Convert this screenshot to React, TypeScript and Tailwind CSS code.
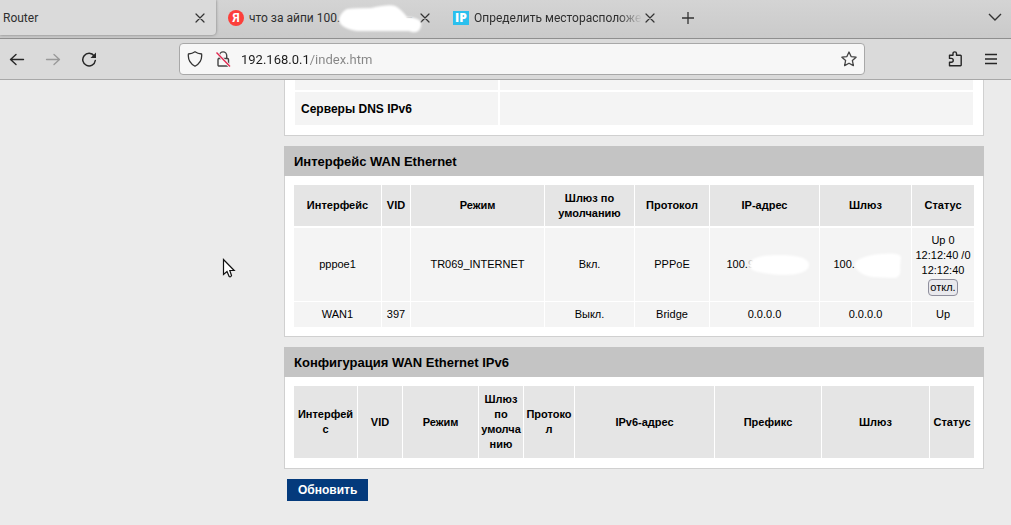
import { type ReactNode } from 'react';

interface TabProps {
    title: string;
    icon?: ReactNode;
    active?: boolean;
    fade?: boolean;
    cover?: ReactNode;
}

interface Column {
    label: string;
    width: string;
}

const wanColumns: Column[] = [
    { label: 'Интерфейс', width: 'w-[88px]' },
    { label: 'VID', width: 'w-[29px]' },
    { label: 'Режим', width: 'w-[134px]' },
    { label: 'Шлюз по умолчанию', width: 'w-[90px]' },
    { label: 'Протокол', width: 'w-[75px]' },
    { label: 'IP-адрес', width: 'w-[110px]' },
    { label: 'Шлюз', width: 'w-[92px]' },
    { label: 'Статус', width: 'w-[62px]' },
];

const ipv6Columns: Column[] = [
    { label: 'Интерфейс', width: 'w-[64px]' },
    { label: 'VID', width: 'w-[45px]' },
    { label: 'Режим', width: 'w-[76px]' },
    { label: 'Шлюз по умолчанию', width: 'w-[45px]' },
    { label: 'Протокол', width: 'w-[51px]' },
    { label: 'IPv6-адрес', width: 'w-[140px]' },
    { label: 'Префикс', width: 'w-[107px]' },
    { label: 'Шлюз', width: 'w-[108px]' },
    { label: 'Статус', width: 'w-[44px]' },
];

function CloseIcon() {
    return (
        <svg className="size-4" viewBox="0 0 16 16" fill="none" stroke="#333" strokeWidth="1.2">
            <path d="M4 4l8 8M12 4l-8 8" strokeLinecap="round" />
        </svg>
    );
}

function YandexIcon() {
    return (
        <span className="mr-[5px] flex size-4 shrink-0 items-center justify-center rounded-full bg-[#fc3f3a] text-xs font-bold leading-4 text-white">
            Я
        </span>
    );
}

function IpIcon() {
    return (
        <span className="mr-[5px] flex h-[14px] w-4 shrink-0 items-center justify-center bg-[#2bc0ee] font-['Open_Sans',sans-serif] text-xs font-extrabold leading-[14px] text-white">
            IP
        </span>
    );
}

function BrowserTab({ title, icon, active, fade, cover }: TabProps) {
    return (
        <div
            className={
                active
                    ? 'flex h-[35px] w-[216px] items-center rounded-br bg-[#dadada] pl-[3px] pr-2 shadow-[0_0_3px_#777]'
                    : 'relative flex h-[35px] w-[225px] items-center pl-3 pr-2'
            }
        >
            {icon}
            <span
                className={
                    fade
                        ? 'min-w-0 flex-1 whitespace-nowrap mask-[linear-gradient(to_left,transparent,black_24px)]'
                        : 'min-w-0 flex-1 whitespace-nowrap'
                }
            >
                {title}
            </span>
            {cover}
            <button type="button" aria-label="Закрыть вкладку">
                <CloseIcon />
            </button>
        </div>
    );
}

function TabStrip() {
    return (
        <div className="flex h-[39px] border-b border-[#8f8f8f] bg-linear-to-b from-[#d4d4d4] to-[#cacaca] text-xs text-[#2e2e2e]">
            <BrowserTab title="Router" active />
            <BrowserTab
                title="что за айпи 100."
                icon={<YandexIcon />}
                cover={
                    <>
                        <span className="mr-1 text-[#999]">–</span>
                        <svg className="absolute left-[121px] top-1 h-[30px] w-[88px] blur-[1px]" viewBox="0 0 88 30" fill="#fff">
                            <path d="M10 5Q20 4 34 4Q52 0 58 2Q64 5 70 13Q86 14 84 22Q82 31 72 27H20Q2 24 2 15Q4 8 10 5Z" />
                        </svg>
                    </>
                }
            />
            <BrowserTab title="Определить месторасположе" icon={<IpIcon />} fade />
            <button type="button" aria-label="Новая вкладка" className="ml-3 h-[35px]">
                <svg className="size-5" viewBox="0 0 20 20" stroke="#333" strokeWidth="1.3">
                    <path d="M10 4v12M4 10h12" />
                </svg>
            </button>
            <button type="button" aria-label="Список вкладок" className="ml-auto mr-2 h-[33px]">
                <svg className="size-4" viewBox="0 0 16 16" fill="none" stroke="#333" strokeWidth="1.4">
                    <path d="M2 5l6 6 6-6" />
                </svg>
            </button>
        </div>
    );
}

function Toolbar() {
    return (
        <div className="flex h-[41px] items-center border-b border-[#a8a8a8] bg-[#dadada]">
            <div className="flex w-[179px] shrink-0 items-center gap-5 pl-[9px]">
                <button type="button" aria-label="Назад">
                    <svg className="size-4" viewBox="0 0 16 16" fill="none" stroke="#262626" strokeWidth="1.4">
                        <path d="M14.500 8.500H1.500M7 3.500L1.500 8.500l5.500 5" strokeLinecap="round" strokeLinejoin="round" />
                    </svg>
                </button>
                <button type="button" aria-label="Вперёд" disabled>
                    <svg className="size-4" viewBox="0 0 16 16" fill="none" stroke="#999" strokeWidth="1.3">
                        <path d="M1.500 8.500h13M9 3.500l5.500 5-5.500 5" strokeLinecap="round" strokeLinejoin="round" />
                    </svg>
                </button>
                <button type="button" aria-label="Обновить страницу">
                    <svg className="size-4" viewBox="0 0 16 16" fill="none" stroke="#262626" strokeWidth="1.5">
                        <path d="M13.200 5A6.300 6.300 0 1 0 14.300 9.500" strokeLinecap="round" />
                        <path d="M15 1.500v5.500H9.500z" fill="#262626" stroke="none" />
                    </svg>
                </button>
            </div>
            <div className="flex h-8 w-[686px] min-w-0 items-center rounded-[4px] border border-[#a8a8a8] bg-[#f7f7f7] px-[7px]">
                <svg className="size-4 shrink-0" viewBox="0 0 16 16" fill="none" stroke="#333" strokeWidth="1.300">
                    <path d="M8 .8Q10.500 2.700 14.600 3Q15.500 11 8 15.200Q.5 11 1.400 3Q5.500 2.700 8 .8Z" strokeLinejoin="round" />
                </svg>
                <svg className="ml-3 size-4 shrink-0" viewBox="0 0 16 16" fill="none" strokeWidth="1.400">
                    <rect x="3" y="7.500" width="10.500" height="7.500" rx="1" stroke="#444" />
                    <path d="M4.500 7.500V4.500a3.600 3.600 0 0 1 7.200 0v3" stroke="#444" />
                    <path d="M1.500 1.500l13.500 14" stroke="#f7f7f7" strokeWidth="3" />
                    <path d="M1.500 1.500l13.500 14" stroke="#e22850" />
                </svg>
                <input
                    type="text"
                    aria-label="Адрес"
                    defaultValue="192.168.0.1/index.htm"
                    className="ml-[10px] min-w-0 flex-1 bg-[linear-gradient(90deg,#1c1c1c_67px,#858585_67px)] bg-clip-text pt-px text-[13px] text-transparent outline-none"
                />
                <button type="button" aria-label="Добавить в закладки">
                    <svg className="size-4" viewBox="0 0 16 16" fill="none" stroke="#444" strokeWidth="1.300">
                        <path
                            d="M8 1l2.100 4.600 5 .6-3.700 3.400 1 5L8 12.200l-4.400 2.400 1-5L.9 6.200l5-.6z"
                            strokeLinejoin="round"
                        />
                    </svg>
                </button>
            </div>
            <button type="button" aria-label="Расширения" className="ml-auto">
                <svg className="size-4" viewBox="0 0 16 16" fill="none" stroke="#262626" strokeWidth="1.400">
                    <path
                        d="M2.500 14.700V11.300H4.300a1.900 1.900 0 0 0 0-3.900H2.500V4.300H6V2.600a1.700 1.700 0 0 1 3.500 0V4.300H13.500a.7.700 0 0 1 .7.700V14a.7.700 0 0 1-.7.700Z"
                        strokeLinejoin="round"
                    />
                </svg>
            </button>
            <button type="button" aria-label="Меню" className="ml-5 mr-3">
                <svg className="size-4" viewBox="0 0 16 16" stroke="#262626" strokeWidth="1.300">
                    <path d="M2 3.500h12M2 8h12M2 12.500h12" />
                </svg>
            </button>
        </div>
    );
}

function Panel({ title, children }: { title: string; children: ReactNode }) {
    return (
        <section className="mt-[10px]">
            <h2 className="h-[30px] bg-[#c4c4c4] px-[10px] text-[13px] font-bold leading-8">{title}</h2>
            <div className="border border-t-0 border-[#d0d0d0] bg-white p-[9px]">{children}</div>
        </section>
    );
}

function HeadRow({ columns, className }: { columns: Column[]; className: string }) {
    return (
        <thead>
            <tr className={className}>
                {columns.map((column) => (
                    <th
                        key={column.label}
                        scope="col"
                        className={`${column.width} border-r border-white bg-[#e5e5e5] bg-clip-padding px-[2px] font-bold wrap-break-word last:border-r-0`}
                    >
                        {column.label}
                    </th>
                ))}
            </tr>
        </thead>
    );
}

function Cell({ children }: { children?: ReactNode }) {
    return <td className="border-r border-white bg-[#f4f4f4] px-[2px] last:border-r-0">{children}</td>;
}

const tableClass = 'w-full table-fixed border-separate border-spacing-0 text-center text-[11px] leading-[15px]';

export default function App() {
    return (
        <div className="relative min-h-screen bg-[#ebebeb] font-['Roboto',sans-serif]">
            <TabStrip />
            <Toolbar />

            <main className="ml-[284px] mr-[27px] pb-6 font-['Liberation_Sans',Arial,sans-serif] text-black">
                <div className="border border-t-0 border-[#d0d0d0] bg-white px-[10px] pb-[10px]">
                    <table className="w-full table-fixed border-separate border-spacing-0 text-left text-xs">
                        <tbody>
                            <tr className="h-3">
                                <td className="w-[205px] border-b-2 border-r-2 border-white bg-[#f4f4f4]" />
                                <td className="border-b-2 border-white bg-[#f4f4f4]" />
                            </tr>
                            <tr className="h-[33px]">
                                <th scope="row" className="border-r-2 border-white bg-[#f4f4f4] px-[6px] font-bold">
                                    Серверы DNS IPv6
                                </th>
                                <td className="bg-[#f4f4f4]" />
                            </tr>
                        </tbody>
                    </table>
                </div>

                <Panel title="Интерфейс WAN Ethernet">
                    <table className={tableClass}>
                        <HeadRow columns={wanColumns} className="h-[43px] *:border-b-2" />
                        <tbody>
                            <tr className="h-[74px] *:border-b">
                                <Cell>pppoe1</Cell>
                                <Cell />
                                <Cell>TR069_INTERNET</Cell>
                                <Cell>Вкл.</Cell>
                                <Cell>PPPoE</Cell>
                                <Cell>
                                    <span className="relative inline-block w-[76px] text-left">
                                        100.<span className="text-[#bbb]">9</span>
                                        <svg className="absolute -top-[4px] left-[20px] h-6 w-[64px] blur-[1px]" viewBox="0 0 64 24" fill="#fff">
                                            <path d="M5 7Q12 2 32 2Q62 2 62 12Q62 22 34 22Q8 20 4 16Q1 11 5 7Z" />
                                        </svg>
                                    </span>
                                </Cell>
                                <Cell>
                                    <span className="relative inline-block w-[64px] text-left">
                                        100.
                                        <svg className="absolute -top-[5px] left-[20px] h-7 w-[50px] blur-[1px]" viewBox="0 0 50 28" fill="#fff">
                                            <path d="M1 11Q6 4 26 2Q46 0 47 5L46 15Q48 26 39 26L18 25Q6 23 1 15Z" />
                                        </svg>
                                    </span>
                                </Cell>
                                <Cell>
                                    Up 0<br />
                                    12:12:40 /0
                                    <br />
                                    12:12:40
                                    <button
                                        type="button"
                                        className="mx-auto mt-px block h-[17px] w-[30px] rounded-[4px] border border-[#8f8f9d] bg-[#e9e9ed] leading-[15px]"
                                    >
                                        откл.
                                    </button>
                                </Cell>
                            </tr>
                            <tr className="h-[25px]">
                                <Cell>WAN1</Cell>
                                <Cell>397</Cell>
                                <Cell />
                                <Cell>Выкл.</Cell>
                                <Cell>Bridge</Cell>
                                <Cell>0.0.0.0</Cell>
                                <Cell>0.0.0.0</Cell>
                                <Cell>Up</Cell>
                            </tr>
                        </tbody>
                    </table>
                </Panel>

                <Panel title="Конфигурация WAN Ethernet IPv6">
                    <table className={tableClass}>
                        <HeadRow columns={ipv6Columns} className="h-[73px] *:border-b" />
                    </table>
                </Panel>

                <button
                    type="button"
                    className="ml-[3px] mt-[10px] block h-[22px] bg-[#043a7c] px-[11px] text-xs font-bold text-white"
                >
                    Обновить
                </button>
            </main>

            {/* mouse pointer */}
            <svg className="pointer-events-none absolute left-[222px] top-[258px] h-[21px] w-[14px]" viewBox="0 0 14 21">
                <path
                    d="M1.500 1.500V16.500L5 13.500L7.200 18.500Q8.500 19.500 9.500 17.500L7.800 12.500H12.200Z"
                    fill="#fff"
                    stroke="#111"
                    strokeWidth="1.200"
                />
            </svg>
        </div>
    );
}
